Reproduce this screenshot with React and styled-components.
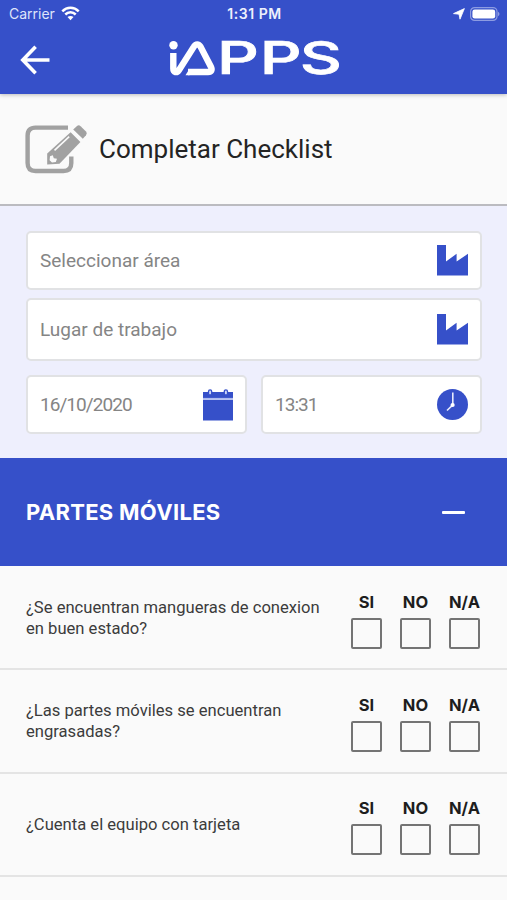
import React from 'react'
import styled, { createGlobalStyle } from 'styled-components'

const GlobalStyle = createGlobalStyle`
  * {
    box-sizing: border-box;
  }

  body {
    margin: 0;
    background: #fafafa;
    font-family: Roboto, "Liberation Sans", sans-serif;
  }

  svg {
    display: block;
    flex-shrink: 0;
  }
`

const blue = '#3650c9'

const Screen = styled.div`
  display: flex;
  flex-direction: column;
  width: 507px;
  height: 900px;
  overflow: hidden;
  background: #fafafa;
`

const Header = styled.header`
  height: 94px;
  background: ${blue};
  color: #fff;
  box-shadow: 0 1px 4px rgba(0, 0, 0, 0.25);
  z-index: 1;
`

const StatusBar = styled.div`
  display: grid;
  grid-template-columns: 1fr auto 1fr;
  align-items: center;
  height: 27px;
  padding: 0 7px 0 9px;
  font-family: Inter, "Liberation Sans", sans-serif;
`

const Carrier = styled.div`
  display: flex;
  align-items: center;
  gap: 6px;
  font-size: 14px;
  color: #dfe4fa;
`

const Time = styled.div`
  font-size: 14px;
  font-weight: 600;
  letter-spacing: 0.55px;
  color: #eef0fc;
`

const StatusIcons = styled.div`
  display: flex;
  align-items: center;
  justify-content: flex-end;
  gap: 5px;
`

const NavBar = styled.div`
  display: grid;
  grid-template-columns: 1fr auto 1fr;
  align-items: center;
  height: 66px;
  padding: 0 20px;
`

const TitleBar = styled.div`
  display: flex;
  align-items: center;
  gap: 11px;
  height: 112px;
  padding: 0 24px;
  border-bottom: 2px solid #bbbbc0;
`

const Title = styled.h1`
  margin: 0;
  font-size: 26px;
  font-weight: 400;
  line-height: 32px;
  color: #242424;
`

const Form = styled.div`
  display: grid;
  grid-template-columns: 221px 221px;
  column-gap: 14px;
  height: 252px;
  padding: 25px 25px 0 26px;
  align-content: start;
  background: #eeeffd;
`

const Field = styled.div`
  display: flex;
  align-items: center;
  justify-content: space-between;
  grid-column: ${({ $wide }) => ($wide ? 'span 2' : 'auto')};
  height: ${({ $tall }) => ($tall ? 63 : 59)}px;
  margin-bottom: ${({ $tall }) => ($tall ? 14 : 8)}px;
  padding: 0 12px;
  border: 2px solid #e1e2e4;
  border-radius: 5px;
  background: #fff;
`

const FieldText = styled.span`
  font-size: 19px;
  letter-spacing: ${({ $digits }) => ($digits ? '-0.95px' : '0')};
  color: #858585;
`

const SectionHeader = styled.div`
  display: flex;
  align-items: center;
  justify-content: space-between;
  height: 108px;
  padding: 0 42px 0 26px;
  background: ${blue};
  color: #fff;
`

const SectionTitle = styled.h2`
  margin: 0;
  font-family: Inter, "Liberation Sans", sans-serif;
  font-size: 22px;
  font-weight: 700;
  letter-spacing: 0.3px;
`

const Minus = styled.div`
  width: 23px;
  height: 3px;
  border-radius: 1px;
  background: #fff;
`

const Checklist = styled.div`
  padding-top: 1px;
`

const Row = styled.div`
  display: flex;
  align-items: center;
  justify-content: space-between;
  height: 103.3px;
  padding: 0 26px;
  border-bottom: 2px solid #e4e4e4;
`

const Question = styled.p`
  width: 300px;
  margin: 0;
  padding-top: 1px;
  font-size: 16.6px;
  line-height: 21px;
  color: #3c3c3c;
`

const Options = styled.div`
  display: grid;
  grid-template-columns: repeat(3, 49px);
  margin-right: -8px;
  padding-top: 5px;
`

const Option = styled.label`
  display: flex;
  flex-direction: column;
  align-items: center;
  gap: 6px;
  font-family: Inter, "Liberation Sans", sans-serif;
  font-size: 16.5px;
  font-weight: 700;
  line-height: 20px;
  color: #1d1d1d;
`

const Box = styled.span`
  width: 31px;
  height: 31px;
  border: 2px solid #747474;
  border-radius: 2px;
`

const WifiIcon = () => (
  <svg width="19" height="15" viewBox="0 0 19 15" fill="none" stroke="#fff" strokeWidth="2.5">
    <path d="M1.3 5.3C5.9.6 13.1.6 17.7 5.3" />
    <path d="M4.3 8.5C7.2 5.6 11.8 5.6 14.7 8.5" />
    <path d="M9.5 14.2 6.5 11.1C8.2 9.6 10.8 9.6 12.5 11.1Z" fill="#fff" stroke="none" />
  </svg>
)

const LocationIcon = () => (
  <svg width="12" height="12" viewBox="0 0 12 12" fill="#fff" stroke="#fff" strokeWidth="0.8" strokeLinejoin="round">
    <path d="M11.4.6 7 11.2 6 6.2.5 5.6Z" />
  </svg>
)

const BatteryIcon = () => (
  <svg width="30" height="14" viewBox="0 0 30 14">
    <rect x="0.6" y="0.6" width="26.4" height="12.8" rx="4" fill="none" stroke="#8d9ce2" strokeWidth="1.2" />
    <rect x="2.4" y="2.4" width="22.8" height="9.2" rx="2.3" fill="#fff" />
    <path d="M28 4.8v4.4c2-.8 2-3.6 0-4.4Z" fill="#8d9ce2" />
  </svg>
)

const BackIcon = () => (
  <svg width="30" height="30" viewBox="0 0 30 30" fill="none" stroke="#fff" strokeWidth="3.6">
    <path d="M29.5 15H3.2M15.6 1.8 2.8 15l12.8 13.2" />
  </svg>
)

const Logo = () => (
  <svg width="180" height="60" viewBox="-3.5 -9 180 60">
    <path
      d="M5.8 14V29.6C5.8 33.6 9.4 34.2 11.4 31.2L26.4 7.6C28.2 4.6 31.2 4.6 33 7.6L43.4 27.8C45 31 43.8 33 40.6 33H20.5"
      fill="none"
      stroke="#fff"
      strokeWidth="6.4"
      strokeLinejoin="round"
    />
    <circle cx="6" cy="6.2" r="4.2" fill="#fff" />
    <path d="M18 36.2 22 29.8V36.2Z" fill="#fff" />
    <text
      x="34.2 63.6 91.2"
      y="35.4"
      transform="scale(1.45 1)"
      fill="#fff"
      stroke="#fff"
      strokeWidth="0.7"
      fontFamily="Inter, sans-serif"
      fontSize="45"
      fontWeight="500"
    >
      PPS
    </text>
  </svg>
)

const EditIcon = () => (
  <svg width="64" height="52" viewBox="0 0 64 52">
    <path
      d="M44 4.6H11.5Q3.6 4.6 3.6 12.5V40Q3.6 48 11.5 48H39.5Q47.3 48 47.3 40V33.5"
      fill="none"
      stroke="#a1a1a1"
      strokeWidth="4.4"
    />
    <path d="M46.6 9.2 56.4 19 35.5 40.8 23.2 41.4 23.2 30.6Z" fill="#a1a1a1" />
    <path d="M49.2 6.4 53 2.9Q54.8 1.6 56.6 3.2L62 8.6Q63.6 10.4 62 12.3L58.8 15.8Z" fill="#a1a1a1" />
    <path d="M30.5 27.4 45.2 13.6" stroke="#fafafa" strokeWidth="1.6" />
    <path d="M26 33.2 28.8 32.3 29.8 35.2 33 35.8 31.8 39 28 39.5 25.6 37.2Z" fill="#fafafa" />
  </svg>
)

const FactoryIcon = () => (
  <svg width="31" height="31" viewBox="0 0 31 31" fill={blue}>
    <path d="M0 0H9V16.5L19.6 8.8V16.5L31 8.8V30.5H0Z" />
  </svg>
)

const CalendarIcon = () => (
  <svg width="30" height="32" viewBox="0 0 30 32">
    <path d="M0 3H30V9H0ZM0 10.8H30V31.5H0Z" fill={blue} />
    <path d="M0 9.8H30" stroke="#aebaf0" strokeWidth="1.8" />
    <g fill="#cdd5f8" stroke={blue} strokeWidth="1.3">
      <rect x="5.5" y="0.8" width="3.2" height="5.2" rx="1.6" />
      <rect x="21.3" y="0.8" width="3.2" height="5.2" rx="1.6" />
    </g>
  </svg>
)

const ClockIcon = () => (
  <svg width="31" height="31" viewBox="0 0 31 31">
    <circle cx="15.5" cy="15.5" r="15.5" fill={blue} />
    <path d="M15.8 3.6V15.8L10 21.5" fill="none" stroke="#e6eafc" strokeWidth="1.6" />
    <circle cx="15.6" cy="16" r="2.1" fill="#fff" />
  </svg>
)

const questions = [
  '¿Se encuentran mangueras de conexion en buen estado?',
  '¿Las partes móviles se encuentran engrasadas?',
  '¿Cuenta el equipo con tarjeta',
]

const ChecklistRow = ({ text }) => {
  return (
    <Row>
      <Question>{text}</Question>
      <Options>
        {['SI', 'NO', 'N/A'].map((option) => (
          <Option key={option}>
            {option}
            <Box />
          </Option>
        ))}
      </Options>
    </Row>
  )
}

export default function App() {
  return (
    <>
      <GlobalStyle />
      <Screen>
        <Header>
          <StatusBar>
            <Carrier>
              Carrier
              <WifiIcon />
            </Carrier>
            <Time>1:31 PM</Time>
            <StatusIcons>
              <LocationIcon />
              <BatteryIcon />
            </StatusIcons>
          </StatusBar>
          <NavBar>
            <BackIcon />
            <Logo />
          </NavBar>
        </Header>
        <TitleBar>
          <EditIcon />
          <Title>Completar Checklist</Title>
        </TitleBar>
        <Form>
          <Field $wide>
            <FieldText>Seleccionar área</FieldText>
            <FactoryIcon />
          </Field>
          <Field $wide $tall>
            <FieldText>Lugar de trabajo</FieldText>
            <FactoryIcon />
          </Field>
          <Field>
            <FieldText $digits>16/10/2020</FieldText>
            <CalendarIcon />
          </Field>
          <Field>
            <FieldText $digits>13:31</FieldText>
            <ClockIcon />
          </Field>
        </Form>
        <SectionHeader>
          <SectionTitle>PARTES MÓVILES</SectionTitle>
          <Minus />
        </SectionHeader>
        <Checklist>
          {questions.map((text) => (
            <ChecklistRow key={text} text={text} />
          ))}
        </Checklist>
      </Screen>
    </>
  )
}
